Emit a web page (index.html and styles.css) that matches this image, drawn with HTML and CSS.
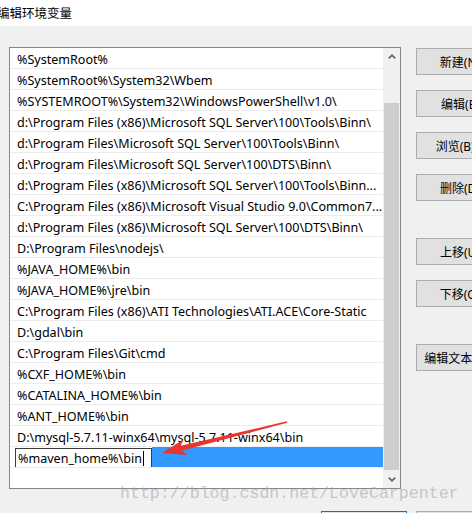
FILE: index.html
```html
<!DOCTYPE html>
<html lang="zh-CN">
<head>
<meta charset="utf-8">
<title>编辑环境变量</title>
<link rel="stylesheet" href="styles.css">
</head>
<body>
<div class="window">
  <div class="titlebar"><span class="title">编辑环境变量</span></div>
  <div class="content">
    <div class="main">
      <div class="listbox">
        <ul class="items">
          <li class="item">%SystemRoot%</li>
          <li class="item">%SystemRoot%\System32\Wbem</li>
          <li class="item">%SYSTEMROOT%\System32\WindowsPowerShell\v1.0\</li>
          <li class="item">d:\Program Files (x86)\Microsoft SQL Server\100\Tools\Binn\</li>
          <li class="item">d:\Program Files\Microsoft SQL Server\100\Tools\Binn\</li>
          <li class="item">d:\Program Files\Microsoft SQL Server\100\DTS\Binn\</li>
          <li class="item">d:\Program Files (x86)\Microsoft SQL Server\100\Tools\Binn...</li>
          <li class="item">C:\Program Files (x86)\Microsoft Visual Studio 9.0\Common7...</li>
          <li class="item">d:\Program Files (x86)\Microsoft SQL Server\100\DTS\Binn\</li>
          <li class="item">D:\Program Files\nodejs\</li>
          <li class="item">%JAVA_HOME%\bin</li>
          <li class="item">%JAVA_HOME%\jre\bin</li>
          <li class="item">C:\Program Files (x86)\ATI Technologies\ATI.ACE\Core-Static</li>
          <li class="item">D:\gdal\bin</li>
          <li class="item">C:\Program Files\Git\cmd</li>
          <li class="item">%CXF_HOME%\bin</li>
          <li class="item">%CATALINA_HOME%\bin</li>
          <li class="item">%ANT_HOME%\bin</li>
          <li class="item">D:\mysql-5.7.11-winx64\mysql-5.7.11-winx64\bin</li>
          <li class="item selected"><span class="editbox">%maven_home%\bin<span class="caret"></span></span><span class="fill"></span></li>
        </ul>
        <div class="scrollbar">
          <div class="sb-arrow">
            <svg width="8" height="5" viewBox="0 0 8 5"><path d="M0.8 4.4 L4 1.2 L7.2 4.4" fill="none" stroke="#606060" stroke-width="1.6"/></svg>
          </div>
          <div class="track"><div class="thumb"></div></div>
          <div class="sb-arrow">
            <svg width="8" height="5" viewBox="0 0 8 5"><path d="M0.8 0.6 L4 3.8 L7.2 0.6" fill="none" stroke="#606060" stroke-width="1.6"/></svg>
          </div>
        </div>
      </div>
      <div class="buttons">
        <button class="btn">新建(N)</button>
        <button class="btn">编辑(E)</button>
        <button class="btn">浏览(B)...</button>
        <button class="btn">删除(D)</button>
        <button class="btn btn-group">上移(U)</button>
        <button class="btn">下移(O)</button>
        <button class="btn btn-group">编辑文本(T)...</button>
      </div>
    </div>
    <div class="footer">
      <button class="btn btn-ok">确定</button>
      <button class="btn">取消</button>
    </div>
  </div>
  <div class="watermark">http://blog.csdn.net/LoveCarpenter</div>
  <svg class="annotation" width="472" height="513" viewBox="0 0 472 513">
    <polygon points="162,453 187.2,455 182,450.6 287.2,422.7 286.8,421.3 180.8,445.8 183.4,439.4" fill="#e8352e"/>
  </svg>
</div>
</body>
</html>
```

FILE: styles.css
```css
html, body {
  margin: 0;
  padding: 0;
  width: 472px;
  height: 513px;
  overflow: hidden;
  background: #f0f0f0;
}

.window {
  position: relative;
  width: 472px;
  height: 513px;
  font-family: "Noto Sans", "Noto Sans CJK SC", sans-serif;
  font-size: 12px;
  color: #000;
}

.titlebar {
  height: 26px;
  background: #fff;
  display: flex;
  align-items: center;
}

.title {
  margin-left: -3px;
  font-family: "Noto Sans CJK SC", sans-serif;
  font-size: 12.5px;
  line-height: 14px;
  margin-top: -1px;
}

.content {
  display: flex;
  flex-direction: column;
}

.main {
  display: flex;
  align-items: flex-start;
  margin-top: 21px;
}

.listbox {
  margin-left: 9px;
  width: 390px;
  height: 440px;
  border: 1px solid #828790;
  background: #fff;
  display: flex;
}

.items {
  list-style: none;
  margin: 0;
  padding: 0;
  width: 373px;
  font-size: 12.55px;
}

.item {
  height: 20px;
  line-height: 23px;
  border-bottom: 1px solid #ececec;
  padding-left: 7px;
  white-space: nowrap;
  overflow: hidden;
}

.item.selected {
  padding-left: 5px;
  display: flex;
  align-items: flex-start;
}

.editbox {
  box-sizing: border-box;
  width: 137px;
  height: 20px;
  margin-top: 1px;
  border: 1px solid #3c3c3c;
  background: #fff;
  padding-left: 2px;
  padding-top: 2px;
  line-height: 16px;
  display: flex;
  align-items: center;
}

.caret {
  display: inline-block;
  width: 1px;
  height: 15px;
  background: #000;
  margin-left: 1px;
  margin-top: -2px;
}

.fill {
  flex: 1;
  height: 20px;
  background: #3399ff;
}

.scrollbar {
  width: 17px;
  display: flex;
  flex-direction: column;
  background: #f0f0f0;
}

.sb-arrow {
  height: 17px;
  display: flex;
  align-items: center;
  justify-content: center;
}

.track {
  flex: 1;
}

.thumb {
  margin-top: 38px;
  margin-left: 1px;
  width: 15px;
  height: 367px;
  background: #cdcdcd;
}

.buttons {
  display: flex;
  flex-direction: column;
  margin-left: 15px;
  margin-top: 1px;
  gap: 15px;
}

.btn {
  box-sizing: border-box;
  width: 88px;
  height: 27px;
  border: 1px solid #adadad;
  background: #e1e1e1;
  font-family: "Noto Sans", "Noto Sans CJK SC", sans-serif;
  font-size: 12px;
  color: #000;
  padding: 0;
  white-space: nowrap;
  flex-shrink: 0;
}

.btn-group {
  margin-top: 22px;
}

.footer {
  display: flex;
  gap: 9px;
  margin-top: 22px;
  margin-left: 321px;
}

.footer .btn {
  width: 86px;
  height: 23px;
}

.btn-ok {
  border-color: #0078d7;
}

.watermark {
  position: absolute;
  left: 120px;
  top: 485px;
  font-family: "Liberation Mono", monospace;
  font-size: 16.6px;
  line-height: 17px;
  color: rgba(160, 160, 160, 0.55);
  white-space: nowrap;
}

.annotation {
  position: absolute;
  left: 0;
  top: 0;
  pointer-events: none;
}
```
